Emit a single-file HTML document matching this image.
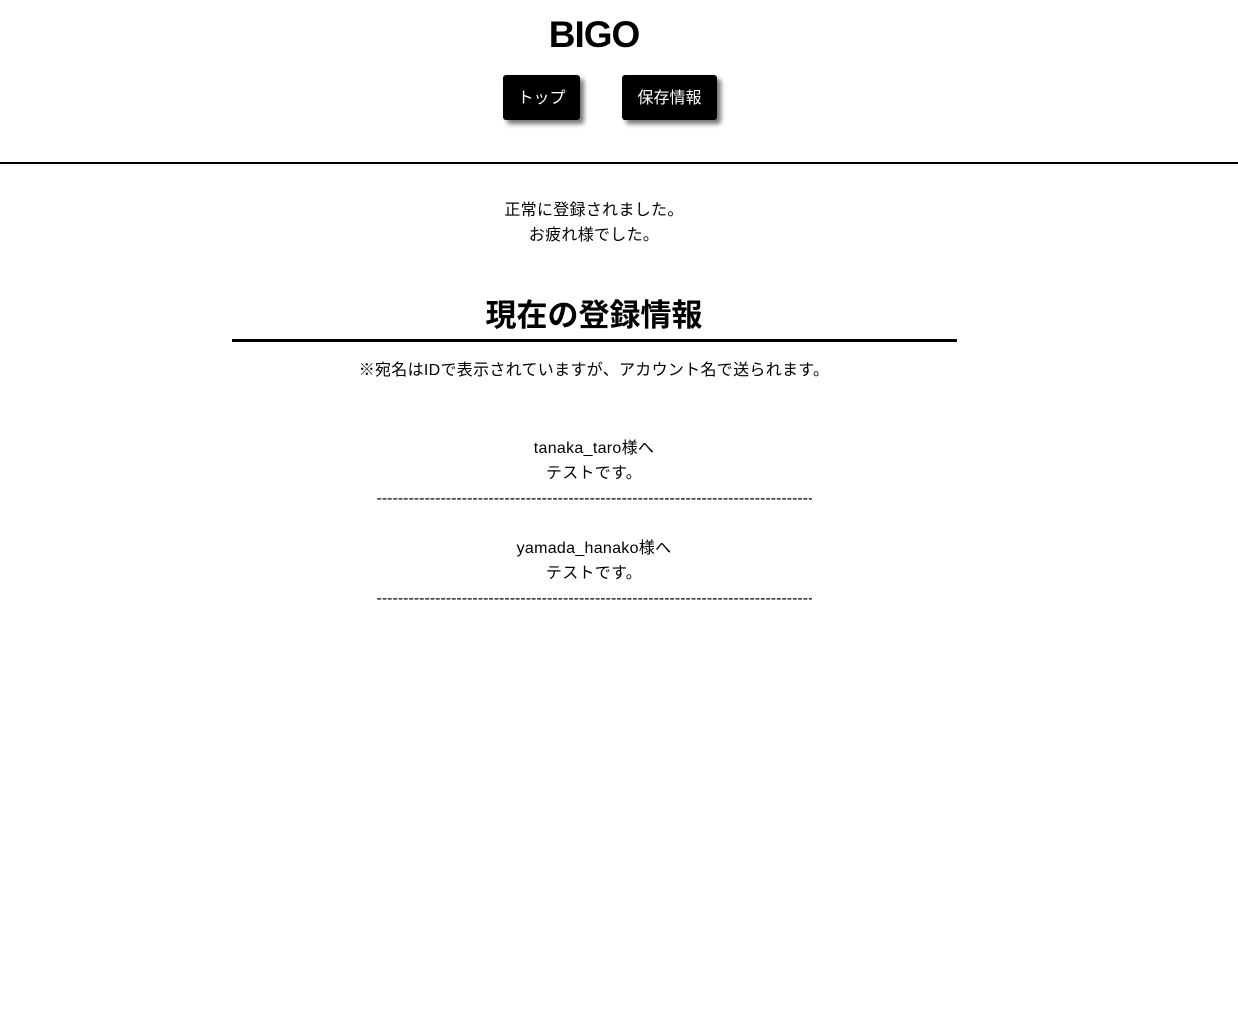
<!DOCTYPE html>
<html><head><meta charset="utf-8"><style>
body{margin:0;background:#fff;font-family:"Liberation Sans","Noto Sans CJK JP",sans-serif;color:#000;}
.a{position:absolute;left:0;width:1238px;text-align:center;}
h1{position:absolute;left:0;width:1188px;text-align:center;margin:0;top:14px;font-size:37px;font-weight:bold;letter-spacing:-1px;}
.btn{position:absolute;top:75px;height:45px;background:#000;color:#fff;border-radius:3px;box-shadow:4px 4px 5px #777;font-size:16px;line-height:47px;text-align:center;}
.hr{position:absolute;left:0;width:1238px;top:162px;height:2px;background:#000;}
.t{font-size:16px;line-height:25px;letter-spacing:0.3px;}
.dash{display:inline-block;width:435px;overflow:hidden;white-space:nowrap;font-size:16px;letter-spacing:0;}
</style></head><body>
<h1>BIGO</h1>
<div class="btn" style="left:503px;width:77px">トップ</div>
<div class="btn" style="left:622px;width:95px">保存情報</div>
<div class="hr"></div>
<div class="a t" style="top:198px;width:1188px">正常に登録されました。<br>お疲れ様でした。</div>
<div class="a" style="top:294px;width:1188px;font-size:31px;font-weight:bold;line-height:44px">現在の登録情報</div>
<div style="position:absolute;left:232px;width:725px;top:339px;height:3px;background:#000"></div>
<div class="a t" style="top:358px;width:1188px">※宛名はIDで表示されていますが、アカウント名で送られます。</div>
<div class="a t" style="top:436px;width:1188px">tanaka_taro様へ<br>テストです。<br><span class="dash">------------------------------------------------------------------------------------------------</span></div>
<div class="a t" style="top:536px;width:1188px">yamada_hanako様へ<br>テストです。<br><span class="dash">------------------------------------------------------------------------------------------------</span></div>
</body></html>
